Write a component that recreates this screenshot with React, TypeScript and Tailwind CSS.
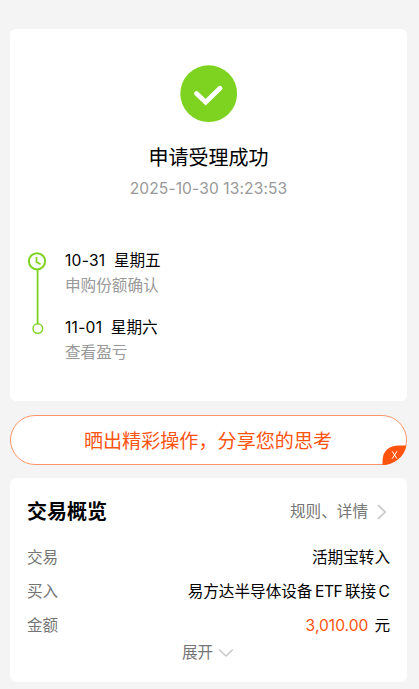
type Step = { date: string; day: string; note: string };

const steps: Step[] = [
  { date: "10-31", day: "星期五", note: "申购份额确认" },
  { date: "11-01", day: "星期六", note: "查看盈亏" },
];

function SuccessIcon() {
  return (
    <svg width="58" height="58" viewBox="0 0 58 58" fill="none">
      <circle cx="28.7" cy="28.7" r="28.4" fill="#7ed321" />
      <path d="M16.5 28.6L25.7 37.2L40 23.2" stroke="#fff" strokeWidth="4.8" strokeLinecap="round" />
    </svg>
  );
}

function TimelineRail() {
  return (
    <svg width="20" height="84" viewBox="0 0 20 84" fill="none" stroke="#7ed321">
      <circle cx="10" cy="10.3" r="8.1" strokeWidth="2" />
      <path d="M9.5 6V10.9L13.5 13.3" strokeWidth="1.7" />
      <path d="M10.6 18.5V72.8" strokeWidth="1.8" />
      <circle cx="10.8" cy="77.6" r="4.8" strokeWidth="1.4" />
    </svg>
  );
}

function ResultCard() {
  return (
    <section className="h-[372px] rounded-md bg-white pt-[35.5px]">
      <div className="flex flex-col items-center">
        <SuccessIcon />
        <h1 className="mt-[20.5px] text-[20px] leading-[30px]">申请受理成功</h1>
        <p className="mt-1 text-[15.6px] leading-6 tracking-[0.1px] text-[#999]">2025-10-30 13:23:53</p>
      </div>
      <div className="mt-[50px] flex pl-[17px]">
        <TimelineRail />
        <div className="-mt-[1px] ml-[18px] flex flex-col gap-[18px]">
          {steps.map((s) => (
            <div key={s.date}>
              <p className="flex h-[24px] gap-[8.5px] text-[15.6px] leading-[22px]">
                <span className="tracking-[0.25px]">{s.date}</span>
                <span>{s.day}</span>
              </p>
              <p className="h-[25px] text-[15.6px] leading-[24px] text-[#999]">{s.note}</p>
            </div>
          ))}
        </div>
      </div>
    </section>
  );
}

function ShareBanner() {
  return (
    <section className="relative mt-[14px] flex h-[50px] items-center justify-center rounded-[25px] border border-[#ff9468] bg-white text-[19.1px] text-[#ff5310]">
      <span className="mr-[1px] pt-[2px]">晒出精彩操作，分享您的思考</span>
      <svg className="absolute -right-px -bottom-px" width="25" height="20" viewBox="0 0 25 20">
        <path d="M0.5 20V16C0.5 6 7 0.5 17 0.5H24.3C22.5 12 12 20 0.5 20Z" fill="#ff5310" />
        <path d="M10.2 6.3L15 13.7M15 6.3L10.2 13.7" stroke="#fff" strokeWidth="1" />
      </svg>
    </section>
  );
}

function OverviewCard() {
  return (
    <section className="mt-[13px] h-[204px] rounded-md bg-white px-[17px] pt-[19px] text-[15.6px]">
      <header className="flex h-[30px] items-center justify-between">
        <h2 className="text-[20px] font-bold leading-[30px]">交易概览</h2>
        <div className="flex items-center text-[#757575]">
          <span>规则、详情</span>
          <svg className="mr-[3px] ml-[9px]" width="10" height="16" viewBox="0 0 10 16" fill="none" stroke="#c8c8c8" strokeWidth="1.7">
            <path d="M1 1.2L8.2 8L1 14.8" />
          </svg>
        </div>
      </header>
      <dl className="mt-[14px]">
        <div className="flex h-[34px] items-center justify-between">
          <dt className="text-[#757575]">交易</dt>
          <dd>活期宝转入</dd>
        </div>
        <div className="flex h-[34px] items-center justify-between">
          <dt className="text-[#757575]">买入</dt>
          <dd className="flex gap-[2.5px]">
            <span>易方达半导体设备</span>
            <span className="tracking-[-0.4px]">ETF</span>
            <span>联接</span>
            <span>C</span>
          </dd>
        </div>
        <div className="flex h-[34px] items-center justify-between">
          <dt className="text-[#757575]">金额</dt>
          <dd className="flex gap-[6px]">
            <span className="text-[#ff5310]">3,010.00</span>
            <span>元</span>
          </dd>
        </div>
      </dl>
      <div className="flex h-5 items-center justify-center pr-[1px] text-[#757575]">
        <span>展开</span>
        <svg className="ml-[5px]" width="16" height="10" viewBox="0 0 16 10" fill="none" stroke="#c8c8c8" strokeWidth="1.5">
          <path d="M1.2 1.5L8 8L14.8 1.5" />
        </svg>
      </div>
    </section>
  );
}

export default function App() {
  return (
    <main className="h-[689px] overflow-hidden bg-[#f4f4f4] pt-[29px] pr-3 pl-[10px] font-[Inter,'Noto_Sans_CJK_SC',sans-serif] text-black">
      <ResultCard />
      <ShareBanner />
      <OverviewCard />
    </main>
  );
}
